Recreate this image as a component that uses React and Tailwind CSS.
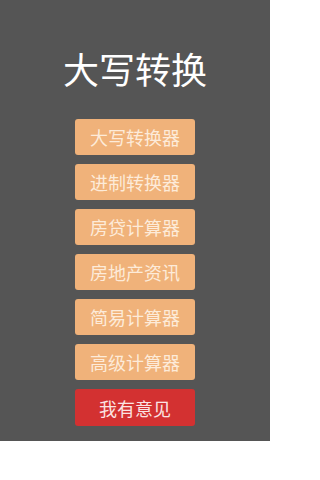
import React from 'react';

const tools = ['大写转换器', '进制转换器', '房贷计算器', '房地产资讯', '简易计算器', '高级计算器'];

const App = () => {
  return (
    <div className="w-[270px] h-[480px] bg-white font-['Noto_Sans_CJK_SC',sans-serif]">
      <div className="h-[441px] bg-[#555555] flex flex-col items-center">
        <h1 className="mt-[46px] text-[36px] leading-[44px] text-white font-normal">大写转换</h1>
        <div className="mt-[29px] flex flex-col gap-[9px]">
          {tools.map((t) => (
            <button
              key={t}
              className="w-[120px] h-[36px] rounded-[3px] bg-[#f0b27a] text-[#fdebd9] text-[18px] leading-none"
            >
              {t}
            </button>
          ))}
          <button className="w-[120px] h-[37px] rounded-[3px] bg-[#d33131] text-[#fbe3e3] text-[18px] leading-none">
            我有意见
          </button>
        </div>
      </div>
    </div>
  );
};

export default App;
